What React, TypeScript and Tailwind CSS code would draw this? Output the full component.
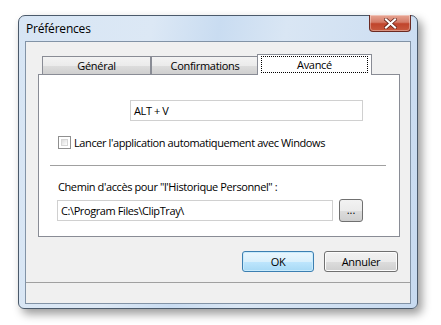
import React from "react";

const font = { fontFamily: '"Open Sans", "Noto Sans", "Liberation Sans", sans-serif' };

function Tab({ label, w, selected }: { label: string; w: string; selected?: boolean }) {
  if (selected) {
    return (
      <div
        className={`relative z-10 -mb-px -ml-[2px] h-[21px] ${w} border border-b-0 border-[#898c95] bg-white px-[3px] pt-[1px]`}
      >
        <div className="flex h-[17px] items-center justify-center border border-dotted border-black text-[11px] leading-none tracking-[-0.3px] text-black">
          {label}
        </div>
      </div>
    );
  }
  return (
    <div
      className={`flex h-[18px] ${w} items-center justify-center border border-b-0 border-[#898c95] bg-[linear-gradient(#f3f3f3_0%,#ebebeb_50%,#dddddd_51%,#cfcfcf_100%)] text-[11px] leading-none tracking-[-0.3px] text-black`}
    >
      {label}
    </div>
  );
}

function Button({ label, w, def }: { label: string; w: string; def?: boolean }) {
  return (
    <div
      className={`flex h-[21px] ${w} items-center justify-center rounded-[3px] border text-[11px] leading-none tracking-[-0.3px] text-black ${
        def
          ? "border-[#3c7fb1] bg-[linear-gradient(#eaf6fd_0%,#d9f0fc_50%,#bee6fd_51%,#a7d9f5_100%)] shadow-[inset_0_0_0_1px_#c9ebfc]"
          : "border-[#707070] bg-[linear-gradient(#f2f2f2_0%,#ebebeb_50%,#dddddd_51%,#cfcfcf_100%)] shadow-[inset_0_0_0_1px_#fcfcfc]"
      }`}
    >
      {label}
    </div>
  );
}

export default function App() {
  return (
    <div className="h-[325px] w-[441px] overflow-hidden bg-white" style={font}>
      <div className="ml-[18px] pt-[15px]">
        <div className="flex h-[294px] w-[400px] flex-col rounded-t-[7px] rounded-b-[6px] border border-[#4b5a6b] bg-[linear-gradient(100deg,#d7e5f4_0%,#dce8f5_30%,#c9dcf1_45%,#d9e6f4_60%,#c7daf0_100%)] shadow-[4px_5px_10px_rgba(0,0,0,0.4)]">
          {/* title bar */}
          <div className="flex h-[25px] shrink-0 items-start justify-between pl-[7px] pr-[6px]">
            <div className="pt-[4px] text-[12px] leading-[18px] tracking-[-0.2px] text-black">Préférences</div>
            <div className="-mt-px flex h-[17px] w-[42px] items-center justify-center rounded-b-[4px] border border-t-0 border-[#6b2a22] bg-[linear-gradient(#e8a593_0%,#d47c68_45%,#c0452c_55%,#c85a3f_100%)] shadow-[inset_0_0_0_1px_rgba(255,255,255,0.35)]">
              <svg width="13" height="11" viewBox="0 0 13 11">
                <path d="M2 1.5 L11 9.5 M11 1.5 L2 9.5" stroke="#5a1a10" strokeWidth="3.6" strokeLinecap="square" />
                <path d="M2 1.5 L11 9.5 M11 1.5 L2 9.5" stroke="#ffffff" strokeWidth="2.2" strokeLinecap="square" />
              </svg>
            </div>
          </div>
          {/* client */}
          <div className="mx-[6px] flex h-[263px] shrink-0 flex-col border border-[#8293a6] bg-[#f0f0f0]">
            <div className="flex flex-col pl-[12px] pr-[10px] pt-[12px]">
              {/* tabs */}
              <div className="flex items-end pl-[4px]">
                <Tab label="Général" w="w-[109px]" />
                <Tab label="Confirmations" w="w-[108px]" />
                <Tab label="Avancé" w="w-[115px]" selected />
              </div>
              {/* panel */}
              <div className="flex h-[163px] flex-col border border-[#898c95] bg-white text-[11px] tracking-[-0.4px]">
                <div className="ml-[91px] mt-[25px] flex h-[21px] w-[233px] items-center border border-[#d0d0d0] bg-white pl-[3px] leading-none text-black">
                  ALT + V
                </div>
                <div className="ml-[19px] mt-[15px] flex items-center">
                  <div className="h-[13px] w-[13px] border border-[#8f8f8f] bg-white p-[2px]">
                    <div className="h-full w-full border border-[#d6d6d6] bg-[linear-gradient(135deg,#dcdcdc,#ffffff)]" />
                  </div>
                  <div className="ml-[3px] leading-none text-black">
                    Lancer l'application automatiquement avec Windows
                  </div>
                </div>
                <div className="ml-[11px] mt-[16px] h-px w-[336px] bg-[#a0a0a0]" />
                <div className="ml-[19px] mt-[14px] leading-[14px] text-black">
                  Chemin d'accès pour "l'Historique Personnel" :
                </div>
                <div className="ml-[18px] mt-[5px] flex items-center">
                  <div className="flex h-[21px] w-[276px] items-center border border-[#d0d0d0] bg-white pl-[3px] leading-none text-black">
                    C:\Program Files\ClipTray\
                  </div>
                  <div className="ml-[6px] flex h-[23px] w-[24px] items-end justify-center rounded-[3px] border border-[#707070] bg-[linear-gradient(#f2f2f2_0%,#ebebeb_50%,#dddddd_51%,#cfcfcf_100%)] pb-[6px] leading-none tracking-normal text-black">
                    ...
                  </div>
                </div>
              </div>
            </div>
            {/* buttons */}
            <div className="mt-[14px] flex justify-end gap-[10px] pr-[12px]">
              <Button label="OK" w="w-[72px]" def />
              <Button label="Annuler" w="w-[74px]" />
            </div>
            {/* status bar */}
            <div className="mt-[10px] flex-1 border-t border-[#a0a0a0] bg-[#f0f0f0]" />
          </div>
        </div>
      </div>
    </div>
  );
}
